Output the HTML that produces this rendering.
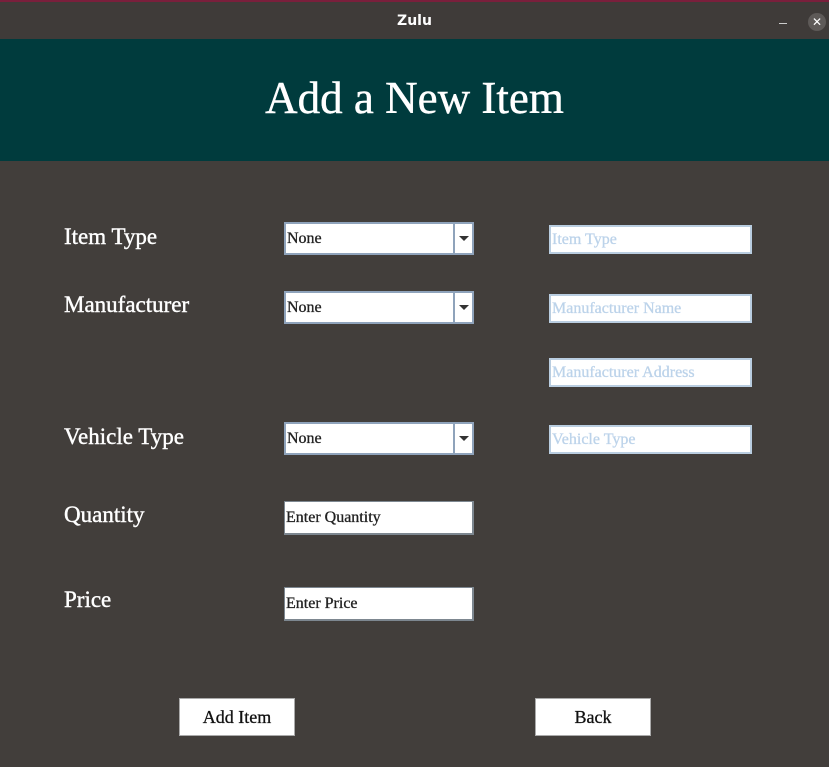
<!DOCTYPE html>
<html><head><style>
*{margin:0;padding:0;box-sizing:border-box}
body{width:829px;height:767px;background:#423e3b;position:relative;overflow:hidden;font-family:"Liberation Serif",serif}
.tb{position:absolute;left:0;top:0;width:829px;height:39px;background:#3f3b39;border-top:2px solid #7a1f3c}
.tb .t{position:absolute;width:100%;text-align:center;top:11px;color:#fff;font:bold 14px "DejaVu Sans",sans-serif}
.min{position:absolute;left:779px;top:21px;width:8px;height:1px;background:#ccc}
.cl{position:absolute;left:808px;top:11px;width:18px;height:18px;border-radius:50%;background:#5e5a58;color:#fff;font:12px "DejaVu Sans";text-align:center;line-height:18px}
.hd{position:absolute;left:0;top:39px;width:829px;height:122px;background:#003b3d;color:#fff;text-align:center;font-size:45px;line-height:118px;-webkit-text-stroke:0.4px #fff}
.lb{position:absolute;left:64px;color:#fff;font-size:23px;-webkit-text-stroke:0.4px #fff;transform:translateY(-50%)}
.cb{position:absolute;left:284px;width:190px;height:33px;background:#fff;border:2px solid #8fa3bb;font-size:16px;-webkit-text-stroke:0.3px #222;color:#222;padding:5px 1px;line-height:20px}
.cb .ar{position:absolute;right:0;top:0;width:19px;height:29px;border-left:2px solid #8fa3bb}
.cb .ar:after{content:"";position:absolute;left:4px;top:12px;border:5px solid transparent;border-top:5px solid #333;border-bottom:0}
.ri{position:absolute;left:549px;width:203px;height:29px;background:#fff;border:2px solid #b9cde0;color:#bcd3ea;font-size:16px;-webkit-text-stroke:0.3px #bcd3ea;padding:3px 1px;line-height:20px}
.ti{position:absolute;left:284px;width:190px;height:34px;background:#fff;border:1px solid #7d8790;border-right-width:2px;border-bottom-width:2px;font-size:16px;-webkit-text-stroke:0.3px #222;color:#222;padding:6px 1px;line-height:20px}
.bt{position:absolute;top:698px;width:116px;height:38px;background:#fff;border:1px solid #aaa;font-size:18px;-webkit-text-stroke:0.3px #111;text-align:center;line-height:36px;color:#111}
</style></head><body>
<div class="tb"><div class="t">Zulu</div><div class="min"></div><div class="cl">✕</div></div>
<div class="hd">Add a New Item</div>
<div class="lb" style="top:237px">Item Type</div>
<div class="lb" style="top:305px">Manufacturer</div>
<div class="lb" style="top:437px">Vehicle Type</div>
<div class="lb" style="top:515px">Quantity</div>
<div class="lb" style="top:600px">Price</div>
<div class="cb" style="top:222px">None<div class="ar"></div></div>
<div class="cb" style="top:291px">None<div class="ar"></div></div>
<div class="cb" style="top:422px">None<div class="ar"></div></div>
<div class="ri" style="top:225px">Item Type</div>
<div class="ri" style="top:294px">Manufacturer Name</div>
<div class="ri" style="top:358px">Manufacturer Address</div>
<div class="ri" style="top:425px">Vehicle Type</div>
<div class="ti" style="top:501px">Enter Quantity</div>
<div class="ti" style="top:587px">Enter Price</div>
<div class="bt" style="left:179px">Add Item</div>
<div class="bt" style="left:535px">Back</div>
</body></html>
